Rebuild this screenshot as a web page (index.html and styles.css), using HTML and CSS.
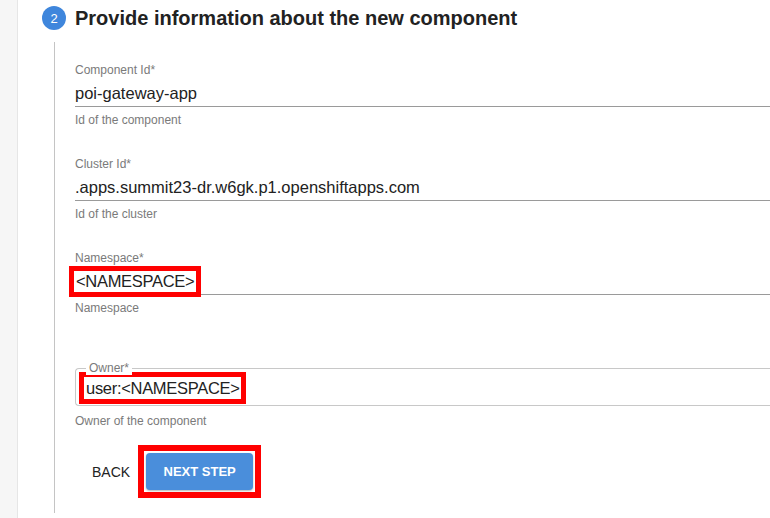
FILE: index.html
```html
<!DOCTYPE html>
<html>
<head>
<meta charset="utf-8">
<link rel="stylesheet" href="styles.css">
</head>
<body>
<div class="page">
  <aside class="sidebar"></aside>
  <main class="main">
    <div class="step-head">
      <span class="step-num">2</span>
      <h2 class="step-title">Provide information about the new component</h2>
    </div>
    <div class="step-body">
      <div class="field">
        <div class="label">Component Id*</div>
        <div class="value">poi-gateway-app</div>
        <div class="helper">Id of the component</div>
      </div>
      <div class="field">
        <div class="label">Cluster Id*</div>
        <div class="value">.apps.summit23-dr.w6gk.p1.openshiftapps.com</div>
        <div class="helper">Id of the cluster</div>
      </div>
      <div class="field">
        <div class="label">Namespace*</div>
        <div class="value"><span class="mark mark-ns">&lt;NAMESPACE&gt;</span></div>
        <div class="helper">Namespace</div>
      </div>
      <div class="field field-outlined">
        <div class="outlined">
          <span class="legend">Owner*</span>
          <span class="mark mark-owner">user:&lt;NAMESPACE&gt;</span>
        </div>
        <div class="helper">Owner of the component</div>
      </div>
      <div class="actions">
        <button class="btn-back">BACK</button>
        <span class="mark-btn"><button class="btn-next">NEXT STEP</button></span>
      </div>
    </div>
  </main>
</div>
</body>
</html>
```

FILE: styles.css
```css
html, body {
  margin: 0;
  padding: 0;
  background: #fff;
  overflow: hidden;
}
body {
  font-family: "Liberation Sans", Arial, sans-serif;
  color: #222;
  width: 770px;
  height: 518px;
}
.page {
  display: flex;
  height: 518px;
}
.sidebar {
  width: 17px;
  flex: none;
  background: #f6f6f6;
  border-right: 1px solid #e6e6e6;
}
.main {
  flex: 1;
  min-width: 0;
  padding-left: 24px;
}
.step-head {
  display: flex;
  align-items: center;
  height: 36px;
}
.step-num {
  width: 24px;
  height: 24px;
  border-radius: 50%;
  background: #3f86dc;
  color: #fff;
  font-size: 13px;
  display: flex;
  align-items: center;
  justify-content: center;
  flex: none;
}
.step-title {
  margin: 0 0 0 9px;
  font-size: 20px;
  font-weight: bold;
  color: #222;
}
.step-body {
  margin-left: 12px;
  margin-top: 6px;
  border-left: 1px solid #c4c4c4;
  padding-left: 20px;
  padding-top: 20px;
  height: 471px;
  box-sizing: border-box;
}
.field {
  height: 94px;
}
.label {
  font-size: 12px;
  line-height: 16px;
  color: #7a7a7a;
}
.value {
  margin-top: 3px;
  height: 24px;
  display: flex;
  align-items: center;
  font-size: 16.5px;
  color: #222;
  border-bottom: 1px solid #9a9a9a;
  padding-bottom: 1px;
}
.helper {
  margin-top: 5px;
  font-size: 12px;
  line-height: 16px;
  color: #7a7a7a;
}
.mark {
  border: 5px solid #ff0000;
  background: #fff;
}
.mark-ns {
  margin: -3px 0 -4px -6px;
  padding: 0 2px 0 2px;
  line-height: 21px;
  letter-spacing: -0.3px;
}
.field-outlined {
  height: auto;
  padding-top: 24px;
}
.outlined {
  position: relative;
  display: flex;
  align-items: flex-start;
  border: 1px solid #c8c8c8;
  border-right: none;
  border-radius: 4px 0 0 4px;
  height: 38px;
  padding: 3px 0 0 3px;
  box-sizing: border-box;
  margin-right: -10px;
  font-size: 16.5px;
}
.legend {
  position: absolute;
  top: -8px;
  left: 10px;
  padding: 0 3px;
  background: #fff;
  font-size: 12px;
  line-height: 14px;
  color: #7a7a7a;
}
.mark-owner {
  padding: 0 1px 0 2px;
  line-height: 22px;
  letter-spacing: -0.3px;
}
.field-outlined .helper {
  margin-top: 7px;
}
.actions {
  display: flex;
  align-items: center;
  margin-top: 16px;
}
.btn-back {
  font-family: inherit;
  font-size: 14px;
  color: #222;
  background: none;
  border: none;
  padding: 0;
  margin-left: 17px;
  margin-right: 8px;
}
.mark-btn {
  display: inline-flex;
  border: 6px solid #ff0000;
  padding: 2px;
  background: #fff;
}
.btn-next {
  font-family: inherit;
  font-size: 13px;
  font-weight: bold;
  color: #fff;
  background: #4a8edb;
  border: none;
  border-radius: 4px;
  width: 107px;
  height: 37px;
  padding: 0;
  box-shadow: 0 1px 2px rgba(0,0,0,0.3);
}
```
